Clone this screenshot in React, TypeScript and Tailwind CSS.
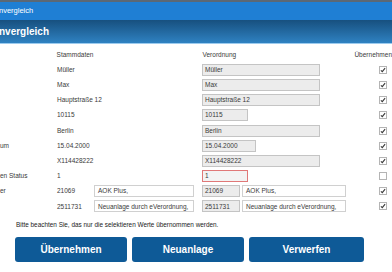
import React from 'react';

type Row = {
  label: string;
  stamm: string;
  ver: string;
  verWidth: string;
  checked: boolean;
  error?: boolean;
};

const rows: Row[] = [
  { label: '', stamm: 'Müller', ver: 'Müller', verWidth: 'w-[118px]', checked: true },
  { label: '', stamm: 'Max', ver: 'Max', verWidth: 'w-[118px]', checked: true },
  { label: '', stamm: 'Hauptstraße 12', ver: 'Hauptstraße 12', verWidth: 'w-[118px]', checked: true },
  { label: '', stamm: '10115', ver: '10115', verWidth: 'w-[46px]', checked: true },
  { label: '', stamm: 'Berlin', ver: 'Berlin', verWidth: 'w-[118px]', checked: true },
  { label: 'um', stamm: '15.04.2000', ver: '15.04.2000', verWidth: 'w-[54px]', checked: true },
  { label: '', stamm: 'X114428222', ver: 'X114428222', verWidth: 'w-[118px]', checked: true },
  { label: 'en Status', stamm: '1', ver: '1', verWidth: 'w-[46px]', checked: false, error: true },
];

const pairs = [
  { label: 'er', code: '21069', text: 'AOK Plus,' },
  { label: '', code: '2511731', text: 'Neuanlage durch eVerordnung,' },
];

function Check({ checked }: { checked: boolean }) {
  return (
    <div className="ml-[22px] w-[8px] h-[8px] border border-[#b4b4b4] bg-white flex items-center justify-center">
      {checked && (
        <svg width="6" height="6" viewBox="0 0 6 6">
          <path d="M0.9 3.3 L2.3 4.7 L5.1 1.1" stroke="#3a3a3a" strokeWidth="1.1" fill="none" />
        </svg>
      )}
    </div>
  );
}

export default function App() {
  return (
    <div
      className="w-[392px] h-[272px] overflow-hidden bg-white text-[#3a3a3a] text-[6.5px]"
      style={{ fontFamily: '"Liberation Sans", Arial, sans-serif' }}
    >
      {/* window title */}
      <div className="h-[2px] bg-[#5b6875]"></div>
      <div className="h-[18px] bg-[#1f7fd4] flex items-center text-white text-[7.5px] -ml-[1px]">
        nvergleich
      </div>
      {/* page header */}
      <div className="h-[23px] bg-gradient-to-b from-[#17507f] to-[#2f82c2] flex items-center text-white text-[10px] font-bold -ml-[1px]">
        nvergleich
      </div>
      <div className="h-[1px] bg-[#9ccbee]"></div>

      <div className="pt-[3px]">
        <div className="flex items-center h-[15.2px]">
          <div className="w-[57px]"></div>
          <div className="w-[147px]">Stammdaten</div>
          <div className="w-[153px]">Verordnung</div>
          <div className="whitespace-nowrap">Übernehmen</div>
        </div>

        {rows.map((r, i) => (
          <div key={i} className="flex items-center h-[15.2px]">
            <div className="w-[57px] whitespace-nowrap">{r.label}</div>
            <div className="w-[145px]">{r.stamm}</div>
            <div className="w-[155px]">
              <div
                className={`${r.verWidth} h-[12px] flex items-center pl-[2px] border ${
                  r.error ? 'border-[#e07878] bg-[#f3f3f3]' : 'border-[#c4c4c4] bg-[#ececec]'
                }`}
              >
                {r.ver}
              </div>
            </div>
            <Check checked={r.checked} />
          </div>
        ))}

        {pairs.map((p, i) => (
          <div key={i} className="flex items-center h-[15.2px]">
            <div className="w-[57px] whitespace-nowrap">{p.label}</div>
            <div className="w-[145px] flex items-center">
              <div className="w-[37px]">{p.code}</div>
              <div className="w-[100px] h-[12px] flex items-center pl-[3px] border border-[#d0d0d0] bg-white whitespace-nowrap">
                {p.text}
              </div>
            </div>
            <div className="w-[155px] flex items-center gap-[2px]">
              <div className="w-[38px] h-[12px] flex items-center pl-[2px] border border-[#c4c4c4] bg-[#ececec]">
                {p.code}
              </div>
              <div className="w-[104px] h-[12px] flex items-center pl-[3px] border border-[#d0d0d0] bg-white whitespace-nowrap">
                {p.text}
              </div>
            </div>
            <Check checked={true} />
          </div>
        ))}

        <div className="mt-[6px] pl-[16px] h-[10px] flex items-center text-[6.4px] text-[#222]">
          Bitte beachten Sie, das nur die selektieren Werte übernommen werden.
        </div>

        <div className="flex gap-[5px] pl-[15px] mt-[7px]">
          <button className="w-[112px] h-[25px] rounded-[3px] bg-[#0e5a97] text-white text-[10px] font-bold">
            Übernehmen
          </button>
          <button className="w-[112px] h-[25px] rounded-[3px] bg-[#0e5a97] text-white text-[10px] font-bold">
            Neuanlage
          </button>
          <button className="w-[115px] h-[25px] rounded-[3px] bg-[#0e5a97] text-white text-[10px] font-bold">
            Verwerfen
          </button>
        </div>
      </div>
    </div>
  );
}
